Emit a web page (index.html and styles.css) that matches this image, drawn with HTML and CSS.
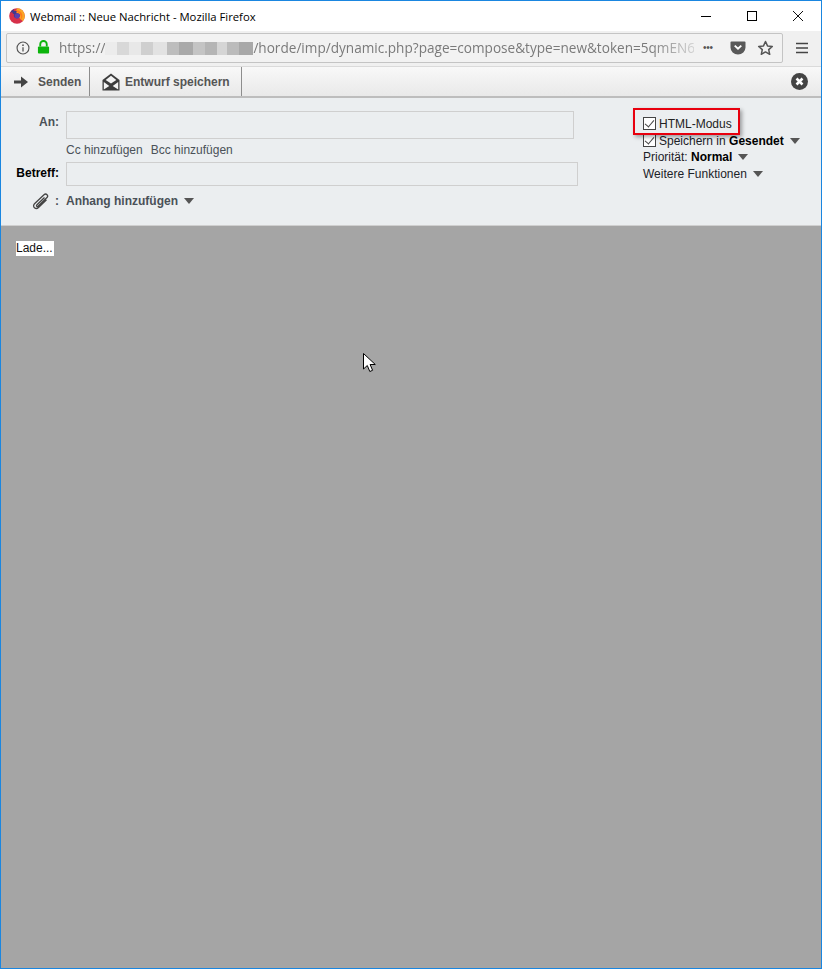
FILE: index.html
```html
<!DOCTYPE html>
<html lang="de">
<head>
<meta charset="utf-8">
<title>Webmail :: Neue Nachricht - Mozilla Firefox</title>
<link rel="stylesheet" href="styles.css">
</head>
<body>
<div class="window">
  <header class="titlebar">
    <svg class="fx-logo" viewBox="0 0 16 16" width="16" height="16">
      <circle cx="8" cy="8" r="7.8" fill="#d6304a"/>
      <path d="M8 .2a7.8 7.8 0 0 1 7.8 7.8c0 2-.8 3.9-2 5.2L9 8.5 7 3z" fill="#f9a825"/>
      <path d="M1 5c1-2 2-3 4-4-.5 1-.4 1.700 0 2.200C6.500 2.700 8 2.700 9 3.500 7.500 3.800 7 4.500 7 5c1 .4 2.500 0 3.500.9 1 1 .8 3-1 4-1.500.8-3.500.3-4.200-1C4.500 8 4.700 6.800 5.500 6.300 4 6 3.300 5 3.300 4 2.500 4.300 1.600 4.500 1 5z" fill="#3f3a8c"/>
      <circle cx="8.200" cy="7.800" r="2.600" fill="#5a3fb0"/>
      <path d="M6 2.500c3-1 6.500.8 7.300 4.200.5 2.300-.5 4.300-2.300 5.500 1-1.500 1.300-3.200.6-4.800C10.800 5.500 9 4.300 6 2.500z" fill="#ff7a1a"/>
    </svg>
    <span class="title-text">Webmail :: Neue Nachricht - Mozilla Firefox</span>
    <div class="win-controls">
      <svg class="win-btn" viewBox="0 0 12 12" width="12" height="12"><path d="M1 6.500h10" stroke="#000" fill="none"/></svg>
      <svg class="win-btn" viewBox="0 0 12 12" width="12" height="12"><rect x="1.500" y="1.500" width="9" height="9" stroke="#000" fill="none"/></svg>
      <svg class="win-btn" viewBox="0 0 12 12" width="12" height="12"><path d="M1 1l10 10M11 1L1 11" stroke="#111" fill="none"/></svg>
    </div>
  </header>

  <nav class="navbar">
    <div class="urlbar">
      <svg class="info-icon" viewBox="0 0 16 16" width="14" height="14">
        <circle cx="8" cy="8" r="6.800" fill="none" stroke="#555" stroke-width="1.300"/>
        <path d="M8 7v5" stroke="#555" stroke-width="1.500"/><circle cx="8" cy="4.800" r="1" fill="#555"/>
      </svg>
      <svg class="lock-icon" viewBox="0 0 14 16" width="13" height="15">
        <path d="M3.500 7V4.500a3.500 3.500 0 0 1 7 0V7" fill="none" stroke="#0cb40c" stroke-width="2"/>
        <rect x="1" y="7" width="12" height="7.500" rx="1" fill="#0cb40c"/>
      </svg>
      <div class="url">
        <span>https://</span><span class="url-blur"></span><span>/horde/imp/dynamic.php?page=compose&amp;type=new&amp;token=5qmEN6L</span>
      </div>
      <span class="dots">•••</span>
      <svg class="pocket" viewBox="0 0 16 16" width="16" height="15">
        <path d="M1 1.500h14a1 1 0 0 1 1 1V8a8 7.500 0 0 1-16 0V2.500a1 1 0 0 1 1-1z" fill="#595959"/>
        <path d="M4.500 6l3.500 3.300L11.500 6" stroke="#fff" stroke-width="2" fill="none"/>
      </svg>
      <svg class="star" viewBox="0 0 16 16" width="17" height="16">
        <path d="M8 1.500l2 4.400 4.800.5-3.600 3.200 1 4.700L8 11.900l-4.200 2.400 1-4.700L1.200 6.400 6 5.900z" fill="none" stroke="#555" stroke-width="1.500" stroke-linejoin="round"/>
      </svg>
    </div>
    <svg class="hamburger" viewBox="0 0 12 12" width="12" height="12">
      <path d="M0 1.500h12M0 6h12M0 10.500h12" stroke="#444" stroke-width="1.600"/>
    </svg>
  </nav>

  <div class="toolbar">
    <a class="tool tool-send">
      <svg viewBox="0 0 14 12" width="14" height="12"><path d="M0 4.500h7V.5L14 6l-7 5.500v-4H0z" fill="#444"/></svg>
      <span>Senden</span>
    </a>
    <a class="tool tool-draft">
      <svg viewBox="0 0 18 18" width="18" height="18">
        <path d="M9 .5L17.500 7v10.500H.5V7z" fill="#3d3d3d"/>
        <path d="M9 2.800L3.700 7 9 10.500 14.300 7z" fill="#f4f4f4"/>
        <path d="M1.800 9l5.500 4-5.500 3.500zM16.200 9l-5.500 4 5.500 3.500z" fill="#f4f4f4"/>
      </svg>
      <span>Entwurf speichern</span>
    </a>
    <svg class="close-compose" viewBox="0 0 16 16" width="17" height="17">
      <circle cx="8" cy="8" r="8" fill="#444"/>
      <path d="M5.200 5.200l5.600 5.600M10.800 5.200l-5.600 5.600" stroke="#fff" stroke-width="2.400"/>
    </svg>
  </div>

  <section class="compose">
    <div class="fields">
      <div class="field-row">
        <label class="field-label label-muted">An:</label>
        <div class="input input-to"></div>
      </div>
      <div class="cc-row"><a>Cc hinzufügen</a><a>Bcc hinzufügen</a></div>
      <div class="field-row">
        <label class="field-label label-strong">Betreff:</label>
        <div class="input input-subject"></div>
      </div>
      <div class="attach-row">
        <div class="field-label clip-label">
          <svg viewBox="0 0 20 18" width="20" height="18">
            <path d="M13.500 5.500L6 12.800c-1 1-.2 2.300 1 1.500l9-8.800c1.800-1.800-.8-4.800-3-2.800L3.500 11.800c-2.700 2.800 1.300 6.300 4 3.700l8-7.800" fill="none" stroke="#444" stroke-width="1.300"/>
          </svg>
          <span class="label-muted">:</span>
        </div>
        <a class="attach-link">Anhang hinzufügen</a><i class="caret"></i>
      </div>
    </div>
    <div class="options">
      <div class="opt opt-html"><i class="check"></i><span>HTML-Modus</span></div>
      <div class="opt opt-save"><i class="check"></i><span>Speichern in <b>Gesendet</b></span><i class="caret"></i></div>
      <div class="opt opt-prio"><span>Priorität: <b>Normal</b></span><i class="caret"></i></div>
      <div class="opt opt-more"><span>Weitere Funktionen</span><i class="caret"></i></div>
      <div class="highlight"></div>
    </div>
  </section>

  <main class="editor">
    <span class="loading">Lade...</span>
    <svg class="cursor" viewBox="0 0 13 20" width="13" height="20">
      <path d="M.5.500v15.500l3.800-3.500 2.500 6 2.800-1.200-2.500-5.800h5.200z" fill="#fff" stroke="#000" stroke-width="1"/>
    </svg>
  </main>
</div>
</body>
</html>
```
FILE: styles.css
```css
* { box-sizing: border-box; }
html, body { margin: 0; height: 100%; }
body { font-family: "Liberation Sans", Arial, sans-serif; font-size: 12px; color: #000; }

.window {
  width: 822px;
  height: 969px;
  display: flex;
  flex-direction: column;
  border: 1px solid #1a86e0;
  overflow: hidden;
}

/* title bar */
.titlebar {
  height: 30px;
  flex: none;
  background: #fff;
  display: flex;
  align-items: center;
  padding-left: 8px;
}
.fx-logo { flex: none; }
.title-text {
  margin-left: 5px;
  font-family: "Open Sans", "Noto Sans", sans-serif;
  font-size: 11.300px;
  color: #000;
  white-space: nowrap;
}
.win-controls { margin-left: auto; display: flex; gap: 34px; padding-right: 17px; padding-top: 0; }
.win-btn { display: block; }

/* nav bar */
.navbar {
  height: 36px;
  flex: none;
  background: #f0f0f0;
  border-bottom: 1px solid #dadada;
  display: flex;
  align-items: center;
  padding: 0 0 2px 5px;
}
.urlbar {
  width: 777px;
  height: 30px;
  background: #f2f2f2;
  border: 1px solid #c4c4c4;
  border-radius: 2px;
  display: flex;
  align-items: center;
  padding-left: 9px;
}
.lock-icon { margin-left: 7px; flex: none; }
.info-icon { flex: none; }
.url {
  margin-left: 9px;
  width: 635px;
  display: flex;
  align-items: center;
  overflow: hidden;
  white-space: nowrap;
  font-family: "Open Sans", "Noto Sans", sans-serif;
  font-size: 13.600px;
  color: #7a7a7a;
  -webkit-mask-image: linear-gradient(to right, #000 93%, rgba(0,0,0,.25) 100%);
  mask-image: linear-gradient(to right, #000 93%, rgba(0,0,0,.25) 100%);
}
.url-blur {
  display: block;
  flex: none;
  width: 148px;
  height: 13px;
  margin-top: 1px;
  background:
    linear-gradient(to right,
      #ececec 0 12px, #d8d8d8 12px 24px, #e8e8e8 24px 36px, #cfcfcf 36px 48px,
      #e2e2e2 48px 62px, #bdbdbd 62px 74px, #a9a9a9 74px 88px, #c4c4c4 88px 100px,
      #b5b5b5 100px 112px, #d5d5d5 112px 122px, #bbb 122px 134px, #a8a8a8 134px 148px);
}
.dots { margin-left: 9px; font-size: 10px; letter-spacing: -.3px; color: #555; width: 24px; flex: none; }
.pocket { margin-left: 3px; flex: none; }
.star { margin-left: 11px; flex: none; }
.hamburger { margin-left: 13px; flex: none; }

/* compose toolbar */
.toolbar {
  height: 31px;
  flex: none;
  background: linear-gradient(#f8f8f8, #e9e9e9);
  border-bottom: 2px solid #bdbdbd;
  display: flex;
  align-items: stretch;
  font-weight: bold;
  color: #555;
}
.tool {
  display: flex;
  align-items: center;
  border-right: 1px solid #8d8d8d;
}
.tool-send { width: 89px; padding-left: 13px; gap: 10px; }
.tool-draft { width: 152px; padding-left: 12px; gap: 5px; }
.close-compose { margin: 6px 13px 0 auto; }

/* compose header */
.compose {
  height: 128px;
  flex: none;
  background: #ebeef0;
  border-bottom: 1px solid #cfcfcf;
  display: flex;
  position: relative;
}
.fields { width: 632px; padding-top: 13px; }
.field-row { display: flex; }
.field-label { width: 58px; text-align: right; font-weight: bold; flex: none; }
.label-muted { color: #4a5158; font-weight: bold; }
.label-strong { color: #000; }
.input-to + *, .input { margin-left: 7px; }
.field-row .field-label { padding-top: 4px; }
.input { background: #ebeef0; border: 1px solid #cfcfcf; }
.input-to { width: 508px; height: 28px; }
.input-subject { width: 512px; height: 24px; }
.cc-row {
  margin: 5px 0 5px 65px;
  height: 13px;
  line-height: 13px;
  color: #4a5158;
  display: flex;
  gap: 8px;
}
.attach-row { display: flex; align-items: center; margin-top: 6px; height: 18px; }
.clip-label { display: flex; align-items: center; justify-content: flex-end; gap: 4px; }
.clip-label svg { display: block; }
.attach-link { margin-left: 7px; font-weight: bold; color: #4a5158; }
.caret {
  display: inline-block;
  width: 0; height: 0;
  border-left: 5.500px solid transparent;
  border-right: 5.500px solid transparent;
  border-top: 6px solid #555;
  margin-left: 6px;
  flex: none;
}

.options { padding: 17px 0 0 10px; flex: 1; color: #1c2228; }
.opt { display: flex; align-items: center; height: 16px; white-space: nowrap; }
.opt span b { color: #000; }
.opt-html { height: 17px; color: #222; }
.opt-save { height: 17px; }
.opt-save .caret { margin-left: 6px; }
.opt-prio { margin-top: 0; }
.opt-more { margin-top: 1px; }
.check {
  width: 13px; height: 13px;
  border: 1px solid #444;
  background: #fff;
  margin-right: 3px;
  flex: none;
  position: relative;
}
.check::after {
  content: "";
  position: absolute;
  left: 3px; top: 0;
  width: 4px; height: 8px;
  border: solid #444;
  border-width: 0 1.500px 1.500px 0;
  transform: rotate(40deg);
}
.highlight {
  position: absolute;
  left: 632px; top: 10px;
  width: 107px; height: 27px;
  border: 2px solid #e8000e;
  box-shadow: 2px 2px 4px rgba(0,0,0,.35);
  pointer-events: none;
}

/* editor */
.editor {
  flex: 1;
  background: #a5a5a5;
  position: relative;
  padding: 15px 0 0 15px;
}
.loading {
  display: inline-block;
  background: #fff;
  color: #111;
  height: 15px;
  line-height: 15px;
  padding-right: 1px;
}
.cursor { position: absolute; left: 362px; top: 127px; }
```
